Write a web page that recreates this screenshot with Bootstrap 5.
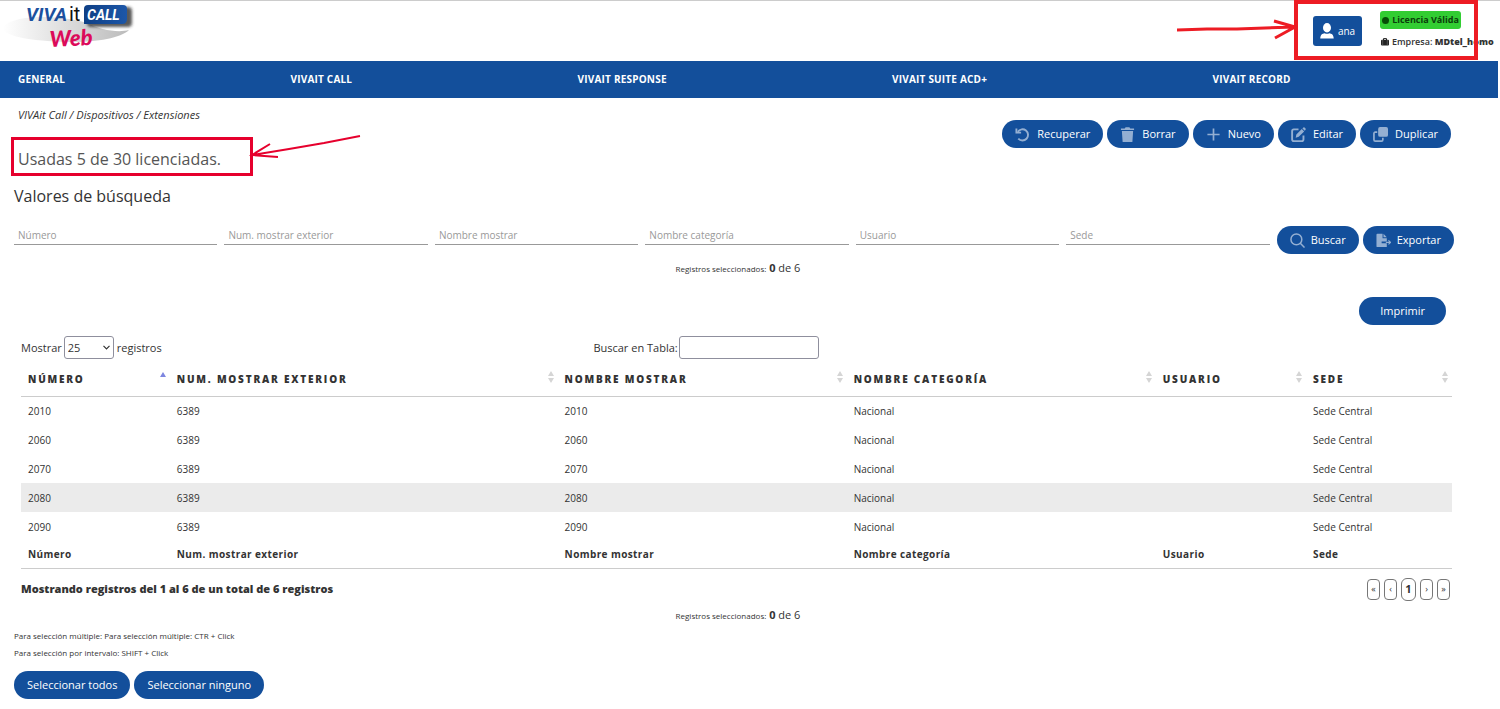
<!DOCTYPE html>
<html lang="es">
<head>
<meta charset="utf-8">
<meta name="viewport" content="width=device-width, initial-scale=1">
<title>VIVAit Call - Extensiones</title>
<link rel="stylesheet" href="https://cdn.jsdelivr.net/npm/bootstrap@5.3.0/dist/css/bootstrap.min.css">
<style>
  :root { --brand: #134f9b; --note: #ed1c24; --note-alt: #e6002d; }
  body { font-family: "Open Sans", "Noto Sans", sans-serif; font-size: 11px; line-height: 16px; color: #333; }
  a { color: inherit; text-decoration: none; }
  .top-bar { height: 61px; border-top: 1px solid #ccc; }
  .brand-logo { width: 140px; height: 54px; }
  .user-area { padding: 10px 8px 0 0; gap: 18px; }
  .btn-user { background: var(--brand); color: #fff; width: 49px; height: 30px; margin-top: 5px; border-radius: 3px; font-size: 10px; gap: 4px; }
  .btn-user:hover { background: #0f4485; color: #fff; }
  .company-info { width: 112px; font-size: 9px; font-weight: 600; }
  .license-tag { background: #32cd32; color: #0b3d0b; font-weight: 700; height: 18px; width: 81px; border-radius: 3px; gap: 3px; }
  .company-line { gap: 3px; margin-top: 5px; padding-left: 1px; white-space: nowrap; }
  .main-nav { background: var(--brand); height: 37px; padding: 0 0 2px 18px; gap: 18px; margin-right: 2px; }
  .main-nav a { color: #fff; font-size: 10px; font-weight: 700; letter-spacing: .02em; }
  .page-body { padding: 9px 46px 0 14px; }
  .crumbs { padding-left: 4px; font-style: italic; }
  .usage-box { border: 3px solid var(--note-alt); width: 242px; height: 39px; margin: 14px 0 0 -3px; padding: 5px 0 0 4px; font-size: 16px; color: #555; }
  .note-arrow { position: absolute; overflow: visible; fill: none; pointer-events: none; }
  .usage-box .note-arrow { left: 235px; top: -5px; stroke: var(--note-alt); stroke-width: 2; }
  .license-note { position: absolute; top: -1px; right: 22px; width: 184px; height: 60px; border: 4px solid var(--note); pointer-events: none; }
  .license-note .note-arrow { left: -121px; top: 14px; stroke: var(--note); stroke-width: 3; }
  .actions { gap: 4px; padding: 13px 3px 0 0; }
  .btn-pill { background: var(--brand); color: #fff; height: 28px; border-radius: 14px; padding: 0 12px; font-size: 11px; line-height: 16px; white-space: nowrap; }
  .btn-pill:hover { background: #0f4485; color: #fff; }
  .btn-pill svg { width: 15px; height: 15px; margin-right: 6px; opacity: .55; }
  .actions svg { margin-right: 7px; }
  .btn-wide { padding: 0 20px; }
  .section-title { font-size: 16px; line-height: 24px; font-weight: 400; margin: 8px 0 18px; }
  .filters { gap: 7px; }
  .filters input { height: 19px; border: 0; border-bottom: 1px solid #999; border-radius: 0; padding: 0 4px; font-size: 10px; min-height: 0; background: none; }
  .filters input::placeholder { color: #999; }
  .filter-buttons { gap: 4px; }
  .counter { font-size: 11px; line-height: 18px; padding-left: 8px; margin-top: 5px; }
  .counter span { font-size: 8px; }
  .grid-area { padding: 0 2px 0 7px; }
  .print-row { padding: 19px 6px 11px 0; }
  .grid-tools select, .grid-tools input { height: 23px; border: 1px solid #8f8f9d; border-radius: 3px; font-size: 11px; line-height: 16px; color: #333; }
  .grid-tools select { width: 50px; margin: 0 3px 0 2px; padding: 0 0 0 3px; appearance: none; background: #fff url("data:image/svg+xml,%3Csvg xmlns='http://www.w3.org/2000/svg' width='7' height='5'%3E%3Cpath d='M.5.8l3 3 3-3' fill='none' stroke='%23333' stroke-width='1.2'/%3E%3C/svg%3E") no-repeat right 3px center; }
  .grid-tools input { width: 140px; margin-left: 1px; padding: 0 4px; }
  .tools-left { width: 40%; }
  .ext-table { table-layout: fixed; margin: 4px 0 9px; color: #333; }
  .ext-table > :not(caption) > * > * { padding: 0 7px; border: 0; vertical-align: middle; background: none; box-shadow: none; color: #333; }
  .ext-table thead th { height: 33px; font-size: 10px; font-weight: 800; letter-spacing: .18em; text-transform: uppercase; border-bottom: 1px solid #ccc !important; }
  .ext-table td { height: 29px; font-size: 10px; }
  .ext-table tfoot th { height: 27px; font-size: 10px; font-weight: 700; letter-spacing: .04em; border-bottom: 1px solid #ccc !important; }
  .ext-table tr.row-hover { background: #ebebeb; }
  .ext-table thead svg { width: 6px; height: 12px; margin-right: -3px; margin-bottom: 4px; }
  .info-text { font-weight: 800; }
  .pager { gap: 4px; padding-right: 2px; }
  .pager button { width: 13px; height: 21px; padding: 0; border: 1px solid #777; border-radius: 4px; background: #fff; font-size: 9px; color: #333; }
  .pager button.current { width: 15px; height: 23px; border-radius: 6px; font-size: 11px; font-weight: 700; }
  .hints { font-size: 8px; line-height: 17px; margin: 2px 0 10px; }
</style>
</head>
<body>
<header class="top-bar position-relative d-flex justify-content-between">
  <a href="#" aria-label="VIVAit Call Web">
    <svg class="brand-logo" viewBox="0 0 140 54">
      <defs>
        <linearGradient id="swoosh"><stop offset="0" stop-color="#fff"/><stop offset="1" stop-color="#bbb"/></linearGradient>
        <linearGradient id="plate" x2="1"><stop offset="0" stop-color="#0e3f85"/><stop offset="1" stop-color="#1d57a8"/></linearGradient>
        <filter id="soft" x="-20%" y="-30%" width="150%" height="180%"><feGaussianBlur stdDeviation="1.5"/></filter>
      </defs>
      <path d="M3 27C10 14 55 13 87 22C100 29 118 32 129 29C121 37 97 41 73 41C39 41 3 36 3 27Z" fill="url(#swoosh)"/>
      <rect x="87" y="6" width="45" height="20" rx="4" fill="#222" opacity=".75" filter="url(#soft)"/>
      <path d="M88 4H123Q127 4 127 8V18Q127 23 122 23H84V8Q84 4 88 4Z" fill="url(#plate)"/>
      <text x="26" y="20" font-family="Roboto,sans-serif" font-size="19" font-weight="700" font-style="italic" fill="#1c509e">VIVA</text>
      <text x="69" y="20" font-family="Roboto,sans-serif" font-size="20" fill="#111">it</text>
      <text x="87" y="19" font-family="Roboto,sans-serif" font-size="14" font-weight="700" font-style="italic" fill="#fff">CALL</text>
      <text x="50" y="46" font-family="Lato,sans-serif" font-size="22" font-weight="900" font-style="italic" fill="#dc0b5a" transform="rotate(-3 50 46)">Web</text>
    </svg>
  </a>
  <div class="user-area d-flex align-items-start">
    <button type="button" class="btn btn-user d-flex align-items-center justify-content-center p-0">
      <svg width="14" height="16" viewBox="0 0 15 17" fill="#fff"><ellipse cx="7.500" cy="5" rx="4.300" ry="5"/><path d="M.3 16.500C.3 12.500 2.500 11 5 10.800Q7.500 12 10 10.800C12.500 11 14.700 12.500 14.700 16.500Z"/></svg>ana
    </button>
    <div class="company-info">
      <div class="license-tag d-flex align-items-center justify-content-center"><svg width="7" height="7"><circle cx="3.500" cy="3.500" r="3.500" fill="#064d06"/></svg>Licencia Válida</div>
      <div class="company-line d-flex align-items-center">
        <svg class="flex-shrink-0" width="8" height="8" viewBox="0 0 8 8"><path d="M2.500 2V.6H5.500V2" fill="none" stroke="#222"/><rect y="1.800" width="8" height="5.700" rx="1" fill="#222"/><path d="M1.700 2V7.500M6.300 2V7.500" stroke="#888" stroke-width=".5"/></svg>
        <span>Empresa: <b>MDtel_homo</b></span>
      </div>
    </div>
  </div>
  <div class="license-note">
    <svg class="note-arrow" width="120" height="22" viewBox="0 0 120 22"><path d="M0 12L30 11L60 11L88 10L118 9M97 3L118 9L98 20" stroke-linejoin="round"/></svg>
  </div>
</header>

<nav class="main-nav d-flex align-items-center" aria-label="Principal">
  <a class="flex-grow-1" href="#">GENERAL</a>
  <a class="flex-grow-1" href="#">VIVAIT CALL</a>
  <a class="flex-grow-1" href="#">VIVAIT RESPONSE</a>
  <a class="flex-grow-1" href="#">VIVAIT SUITE ACD+</a>
  <a class="flex-grow-1" href="#">VIVAIT RECORD</a>
</nav>

<main class="page-body">
  <div class="d-flex justify-content-between align-items-start">
    <div>
      <div class="crumbs"><a href="#">VIVAit Call</a> / <a href="#">Dispositivos</a> / <a href="#">Extensiones</a></div>
      <div class="usage-box position-relative text-nowrap d-flex align-items-center">Usadas 5 de 30 licenciadas.
        <svg class="note-arrow" width="112" height="26" viewBox="0 0 112 26"><path d="M111 1L75 8L40 14L3 20M21 9L3 20L29 22"/></svg>
      </div>
    </div>
    <div class="actions d-flex">
      <button type="button" class="btn btn-pill d-flex align-items-center"><svg viewBox="0 0 16 16" fill="none" stroke="#fff" stroke-width="2"><path d="M3 5A6 6 0 1 1 3.500 12.500"/><path d="M1.500 1.500V6H6.500"/></svg>Recuperar</button>
      <button type="button" class="btn btn-pill d-flex align-items-center"><svg viewBox="0 0 16 16" fill="#fff"><path d="M1 1.500H5L6 .3H10L11 1.500H15V3.300H1ZM2 4.300H14L13.200 16H2.800Z"/></svg>Borrar</button>
      <button type="button" class="btn btn-pill d-flex align-items-center"><svg viewBox="0 0 16 16" fill="none" stroke="#fff" stroke-width="1.800"><path d="M8 1.500V14.500M1.500 8H14.500"/></svg>Nuevo</button>
      <button type="button" class="btn btn-pill d-flex align-items-center"><svg viewBox="0 0 16 16"><path d="M8 2.500H3Q1.200 2.500 1.200 4.500V13Q1.200 15 3 15H11.500Q13.300 15 13.300 13V9" fill="none" stroke="#fff" stroke-width="2"/><path d="M5 11.500L5.700 8L11.500 2.200L14 4.700L8.200 10.500ZM12.200 1.500L13.200 .5Q14 0 14.800 .8L15.500 1.500Q16 2.300 15.500 3L14.700 4Z" fill="#fff"/></svg>Editar</button>
      <button type="button" class="btn btn-pill d-flex align-items-center"><svg viewBox="0 0 16 16"><rect x="5.500" width="10.500" height="10.500" rx="2" fill="#fff"/><path d="M4.500 5.500H2.500Q1 5.500 1 7V13.500Q1 15 2.500 15H9Q10.500 15 10.500 13.500V11.500" fill="none" stroke="#fff" stroke-width="1.800"/></svg>Duplicar</button>
    </div>
  </div>

  <h1 class="section-title">Valores de búsqueda</h1>
  <form class="filters d-flex align-items-start">
    <input class="form-control" type="text" placeholder="Número" aria-label="Número">
    <input class="form-control" type="text" placeholder="Num. mostrar exterior" aria-label="Num. mostrar exterior">
    <input class="form-control" type="text" placeholder="Nombre mostrar" aria-label="Nombre mostrar">
    <input class="form-control" type="text" placeholder="Nombre categoría" aria-label="Nombre categoría">
    <input class="form-control" type="text" placeholder="Usuario" aria-label="Usuario">
    <input class="form-control" type="text" placeholder="Sede" aria-label="Sede">
    <div class="filter-buttons d-flex">
      <button type="button" class="btn btn-pill d-flex align-items-center"><svg viewBox="0 0 16 16" fill="none" stroke="#fff" stroke-width="1.600"><circle cx="6.800" cy="6.800" r="5.800"/><path d="M11 11L15.500 15.500"/></svg>Buscar</button>
      <button type="button" class="btn btn-pill d-flex align-items-center"><svg viewBox="0 0 16 16"><path d="M1.500 .8H7V5.500H11.500V9H6V11H11.500V15H1.500Q.5 15 .5 14V1.800Q.5 .8 1.500 .8ZM8 .8L11.500 4.500H8Z" fill="#fff"/><path d="M10.500 10H15.500M13.300 7.800L15.500 10L13.300 12.200" fill="none" stroke="#fff" stroke-width="1.200"/></svg>Exportar</button>
    </div>
  </form>

  <div class="counter text-center"><span>Registros seleccionados:</span> <b>0</b> de 6</div>

  <section class="grid-area">
    <div class="print-row d-flex justify-content-end">
      <button type="button" class="btn btn-pill btn-wide">Imprimir</button>
    </div>
    <div class="grid-tools d-flex align-items-center">
      <div class="tools-left d-flex align-items-center">
        <label for="pageLen">Mostrar</label>
        <select id="pageLen"><option>10</option><option selected>25</option><option>50</option></select>
        <span>registros</span>
      </div>
      <label for="tableSearch">Buscar en Tabla:</label><input id="tableSearch" type="search">
    </div>

    <table class="table ext-table">
      <colgroup><col style="width:10.4%"><col style="width:27.1%"><col style="width:20.2%"><col style="width:21.6%"><col style="width:10.5%"><col style="width:10.2%"></colgroup>
      <thead>
        <tr>
          <th><div class="d-flex justify-content-between align-items-center">Número<svg viewBox="0 0 6 12"><path d="M0 6L3 1L6 6Z" fill="#7d86e0"/></svg></div></th>
          <th><div class="d-flex justify-content-between align-items-center">Num. mostrar exterior<svg viewBox="0 0 6 12"><path d="M0 5L3 0L6 5ZM0 7L3 12L6 7Z" fill="#d5d5d5"/></svg></div></th>
          <th><div class="d-flex justify-content-between align-items-center">Nombre mostrar<svg viewBox="0 0 6 12"><path d="M0 5L3 0L6 5ZM0 7L3 12L6 7Z" fill="#d5d5d5"/></svg></div></th>
          <th><div class="d-flex justify-content-between align-items-center">Nombre categoría<svg viewBox="0 0 6 12"><path d="M0 5L3 0L6 5ZM0 7L3 12L6 7Z" fill="#d5d5d5"/></svg></div></th>
          <th><div class="d-flex justify-content-between align-items-center">Usuario<svg viewBox="0 0 6 12"><path d="M0 5L3 0L6 5ZM0 7L3 12L6 7Z" fill="#d5d5d5"/></svg></div></th>
          <th><div class="d-flex justify-content-between align-items-center">Sede<svg viewBox="0 0 6 12"><path d="M0 5L3 0L6 5ZM0 7L3 12L6 7Z" fill="#d5d5d5"/></svg></div></th>
        </tr>
      </thead>
      <tbody>
        <tr><td>2010</td><td>6389</td><td>2010</td><td>Nacional</td><td></td><td>Sede Central</td></tr>
        <tr><td>2060</td><td>6389</td><td>2060</td><td>Nacional</td><td></td><td>Sede Central</td></tr>
        <tr><td>2070</td><td>6389</td><td>2070</td><td>Nacional</td><td></td><td>Sede Central</td></tr>
        <tr class="row-hover"><td>2080</td><td>6389</td><td>2080</td><td>Nacional</td><td></td><td>Sede Central</td></tr>
        <tr><td>2090</td><td>6389</td><td>2090</td><td>Nacional</td><td></td><td>Sede Central</td></tr>
      </tbody>
      <tfoot>
        <tr><th>Número</th><th>Num. mostrar exterior</th><th>Nombre mostrar</th><th>Nombre categoría</th><th>Usuario</th><th>Sede</th></tr>
      </tfoot>
    </table>

    <div class="d-flex justify-content-between align-items-center">
      <div class="info-text">Mostrando registros del 1 al 6 de un total de 6 registros</div>
      <div class="pager d-flex align-items-center" role="group" aria-label="Paginación">
        <button type="button">«</button>
        <button type="button">‹</button>
        <button type="button" class="current">1</button>
        <button type="button">›</button>
        <button type="button">»</button>
      </div>
    </div>
  </section>

  <div class="counter text-center"><span>Registros seleccionados:</span> <b>0</b> de 6</div>
  <div class="hints">
    <div>Para selección múltiple: Para selección múltiple: CTR + Click</div>
    <div>Para selección por intervalo: SHIFT + Click</div>
  </div>
  <div class="d-flex gap-1">
    <button type="button" class="btn btn-pill">Seleccionar todos</button>
    <button type="button" class="btn btn-pill">Seleccionar ninguno</button>
  </div>
</main>
<script src="https://cdn.jsdelivr.net/npm/bootstrap@5.3.0/dist/js/bootstrap.bundle.min.js"></script>
</body>
</html>
